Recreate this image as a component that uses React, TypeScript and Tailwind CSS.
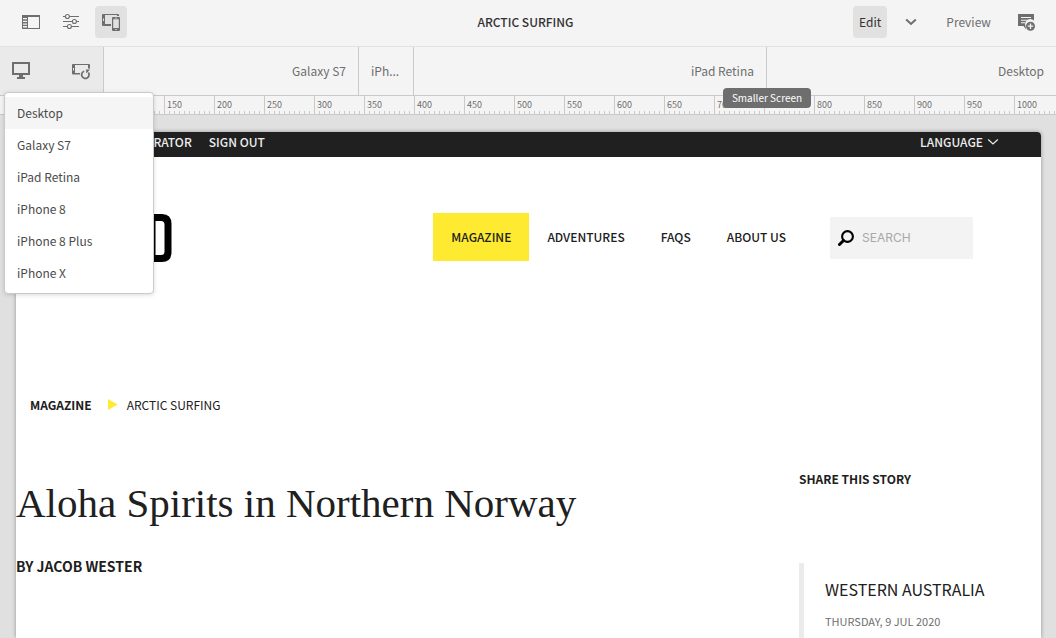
import React from "react";

const devices = ["Desktop", "Galaxy S7", "iPad Retina", "iPhone 8", "iPhone 8 Plus", "iPhone X"];
const marks = Array.from({ length: 21 }, (_, i) => i * 50);

function SidePanelIcon() {
  return (
    <svg width="18" height="14" viewBox="0 0 18 14" aria-hidden="true">
      <path fill="#6e6e6e" fillRule="evenodd" d="M0 0h18v14H0zM6 2v11h11V2zM1 3v1.300h4V3zM1 5.700V7h4V5.700zM1 8.400v1.300h4V8.400zM1 11.100v1.300h4v-1.300z" />
    </svg>
  );
}

function SlidersIcon() {
  return (
    <svg width="18" height="18" viewBox="0 0 18 18" fill="none" stroke="#6e6e6e" strokeWidth="1.100" aria-hidden="true">
      <path d="M1 3.500h2.400M7.400 3.500H17M1 8.500h9.400M14.400 8.500H17M1 13.500h4.400M9.400 13.500H17" />
      <circle cx="5.400" cy="3.500" r="2" />
      <circle cx="12.400" cy="8.500" r="2" />
      <circle cx="7.400" cy="13.500" r="2" />
    </svg>
  );
}

function DevicesIcon() {
  return (
    <svg width="18" height="18" viewBox="0 0 18 18" aria-hidden="true">
      <path fill="#6e6e6e" fillRule="evenodd" d="M1 1h15a1 1 0 0 1 1 1v1h-2V2H3v9h6v2H1a1 1 0 0 1-1-1V2a1 1 0 0 1 1-1zM1 5.500v2.500h1V5.500z" />
      <path fill="#6e6e6e" fillRule="evenodd" d="M11 4h6a1 1 0 0 1 1 1v12a1 1 0 0 1-1 1h-6a1 1 0 0 1-1-1V5a1 1 0 0 1 1-1zM11.200 6.200v8.800h5.600V6.200zM12.800 4.700v.7h2.400v-.7zM13.300 15.900v1.200h1.400v-1.200z" />
    </svg>
  );
}

function MonitorIcon() {
  return (
    <svg width="18" height="18" viewBox="0 0 18 18" aria-hidden="true">
      <path fill="#6e6e6e" fillRule="evenodd" d="M0 0h18v13h-7v2h2v2H5v-2h2v-2H0zM2 2v9h14V2z" />
    </svg>
  );
}

function RotateDeviceIcon() {
  return (
    <svg width="18" height="18" viewBox="0 0 18 18" aria-hidden="true">
      <path fill="#6e6e6e" fillRule="evenodd" d="M1 2h16a1 1 0 0 1 1 1v3.500h-2V3H3v8h5v1.500H1a1 1 0 0 1-1-1V3a1 1 0 0 1 1-1zM1 6v2.500h1V6z" />
      <path fill="none" stroke="#6e6e6e" strokeWidth="1.700" d="M12.200 9.200a3.700 3.700 0 1 0 4.200 1.400" />
      <path fill="#6e6e6e" d="M14 7.600h4l-3.600 4z" />
    </svg>
  );
}

function AnnotateIcon() {
  return (
    <svg width="18" height="18" viewBox="0 0 18 18" aria-hidden="true">
      <path fill="#6e6e6e" d="M0 1h16v6.500a5.200 5.200 0 0 0-8.500 5.500L8 16.500 5.500 13H0z" />
      <path stroke="#f4f4f4" strokeWidth="1.100" d="M3 4.500h10M3 7.200h8.500M3 9.800h4.500" />
      <circle cx="12.500" cy="13.200" r="4.500" fill="#6e6e6e" />
      <path stroke="#f4f4f4" strokeWidth="1.300" d="M12.500 10.500v5.400M9.800 13.200h5.400" />
    </svg>
  );
}

function Chevron({ className, width }: { className: string; width: number }) {
  return (
    <svg width="12" height="8" viewBox="0 0 12 8" fill="none" stroke="currentColor" strokeWidth={width} className={className} aria-hidden="true">
      <path d="M1.200 1.500 6 6l4.800-4.500" />
    </svg>
  );
}

function Toolbar() {
  return (
    <header className="grid h-[47px] shrink-0 grid-cols-[1fr_auto_1fr] items-center border-b border-[#e1e1e1] pr-5 pb-0.5 pl-[15px]">
      <div className="flex gap-2">
        <button aria-label="Toggle side panel" className="flex size-8 items-center justify-center"><SidePanelIcon /></button>
        <button aria-label="Page information" className="flex size-8 items-center justify-center"><SlidersIcon /></button>
        <button aria-label="Emulator" className="flex size-8 items-center justify-center rounded bg-[#e1e1e1]"><DevicesIcon /></button>
      </div>
      <h2 className="font-medium text-[#323232]">ARCTIC SURFING</h2>
      <div className="flex items-center justify-end">
        <button className="h-8 rounded bg-[#e1e1e1] px-1.5 text-[#323232]">Edit</button>
        <button aria-label="Choose mode" className="mr-[29px] ml-[18px] text-[#6e6e6e]"><Chevron className="block" width={2} /></button>
        <button className="mr-[27px]">Preview</button>
        <button aria-label="Annotate"><AnnotateIcon /></button>
      </div>
    </header>
  );
}

function DeviceBar() {
  return (
    <div className="flex h-[49px] shrink-0 border-b border-[#cacaca]">
      <div className="relative flex w-26 shrink-0 items-center justify-between border-r border-[#cacaca] bg-[#eaeaea] pr-[13px] pl-3">
        <button aria-label="Choose device" aria-expanded="true"><MonitorIcon /></button>
        <button aria-label="Rotate device"><RotateDeviceIcon /></button>
        <ul className="absolute top-[45px] left-1 z-10 w-[150px] rounded border border-[#cacaca] bg-white py-1 text-[#4b4b4b] shadow-[0_1px_4px_rgba(0,0,0,0.15)]">
          {devices.map((name, i) => (
            <li key={name}>
              <button className={i === 0 ? "block h-8 w-full bg-[#f5f5f5] px-3 text-left" : "block h-8 w-full px-3 text-left"}>{name}</button>
            </li>
          ))}
        </ul>
      </div>
      <button className="w-[255px] shrink-0 border-r border-[#cacaca] pr-3 text-right">Galaxy S7</button>
      <button aria-label="iPhone" className="w-[55px] shrink-0 border-r border-[#cacaca] px-3 text-left">iPh...</button>
      <button className="relative w-[353px] shrink-0 border-r border-[#cacaca] pr-3 text-right">
        iPad Retina
        <span role="tooltip" className="absolute top-[41px] -right-[45px] z-10 h-5 w-[88px] rounded bg-[#6e6e6e] text-center text-[10px] leading-5 whitespace-nowrap text-white">Smaller Screen</span>
      </button>
      <button className="min-w-0 flex-1 pr-3 text-right">Desktop</button>
    </div>
  );
}

function Ruler() {
  return (
    <div className="flex h-[19px] shrink-0 overflow-hidden border-b border-[#cacaca] pl-3.5 text-[9px] leading-[17px]">
      {marks.map((mark) => (
        <div key={mark} className="w-[50px] shrink-0 border-l border-[#cacaca] bg-[repeating-linear-gradient(to_right,transparent_0_4px,#cacaca_4px_5px)] bg-[length:100%_3px] bg-bottom bg-no-repeat pl-0.5">
          {mark}
        </div>
      ))}
    </div>
  );
}

function SiteHeader() {
  return (
    <>
      <div className="flex h-[25px] items-center gap-[17px] rounded-t bg-[#202020] pr-[42px] pb-[5px] pl-[81px] font-medium text-[#ededed]">
        <a href="#profile">ADMINISTRATOR</a>
        <a href="#signout">SIGN OUT</a>
        <button className="ml-auto flex items-center gap-1">LANGUAGE <Chevron className="block" width={1.200} /></button>
      </div>
      <div className="flex items-start pt-14 pr-[68px]">
        <a href="#home" aria-label="Home" className="mt-px ml-[132px]">
          <svg width="24" height="48" viewBox="0 0 24 48" aria-hidden="true" className="block">
            <path fill="#000" fillRule="evenodd" d="M0 0h14q9.500 0 9.500 10v28q0 10-9.500 10H0zM7.500 7v34H13q3.500 0 3.500-3.500v-27Q16.500 7 13 7z" />
          </svg>
        </a>
        <nav className="ml-auto flex h-12 leading-12 font-medium text-[#202020]">
          <a href="#magazine" className="bg-[#ffea32] px-[18px]">MAGAZINE</a>
          <a href="#adventures" className="px-[18px]">ADVENTURES</a>
          <a href="#faqs" className="px-[18px]">FAQS</a>
          <a href="#about" className="px-[18px]">ABOUT US</a>
        </nav>
        <label className="mt-1 ml-[26px] flex h-[42px] w-[143px] items-center gap-2 bg-[#f3f3f3] pl-2">
          <svg width="16" height="16" viewBox="0 0 16 16" fill="none" stroke="#000" aria-hidden="true" className="shrink-0">
            <circle cx="9.500" cy="6.500" r="5.400" strokeWidth="2.100" />
            <path d="M5.500 10.500 1.500 14.500" strokeWidth="3" strokeLinecap="round" />
          </svg>
          <input aria-label="Search" placeholder="SEARCH" className="w-full min-w-0 bg-transparent font-['Inter','Liberation_Sans',sans-serif] text-[12px] outline-none placeholder:text-[#a8a8a8]" />
        </label>
      </div>
    </>
  );
}

export default function App() {
  return (
    <div className="flex h-screen flex-col overflow-hidden bg-[#f4f4f4] font-['Noto_Sans_CJK_SC','Noto_Sans',sans-serif] text-[12px] leading-5 text-[#6e6e6e]">
      <Toolbar />
      <DeviceBar />
      <Ruler />
      <div className="min-h-0 flex-1 bg-[#e0e0e0] pt-[17px] pr-[15px] pl-4">
        <main className="h-full rounded-t bg-white text-[#202020] shadow-[0_0_4px_rgba(0,0,0,0.35)]">
          <SiteHeader />
          <nav aria-label="Breadcrumb" className="mt-[133px] flex items-center pl-3.5">
            <a href="#magazine" className="font-bold">MAGAZINE</a>
            <svg width="10" height="12" viewBox="0 0 10 12" className="mr-[9px] ml-4" aria-hidden="true">
              <path fill="#ffea32" d="M0 0l9.500 5.500L0 11z" />
            </svg>
            <span>ARCTIC SURFING</span>
          </nav>
          <div className="grid grid-cols-[1fr_242px]">
            <article className="pt-16">
              <h1 className="font-['Liberation_Serif',serif] text-[41px] leading-12">Aloha Spirits in Northern Norway</h1>
              <p className="mt-[29px] text-[14px] font-bold">BY JACOB WESTER</p>
            </article>
            <aside className="pt-[54px]">
              <h3 className="font-bold">SHARE THIS STORY</h3>
              <div className="mt-[74px] border-l-[5px] border-[#ebebeb] pt-3.5 pb-10 pl-[21px]">
                <h4 className="text-[16px] leading-6">WESTERN AUSTRALIA</h4>
                <p className="mt-2.5 text-[11px] text-[#6e6e6e]">THURSDAY, 9 JUL 2020</p>
              </div>
            </aside>
          </div>
        </main>
      </div>
    </div>
  );
}
